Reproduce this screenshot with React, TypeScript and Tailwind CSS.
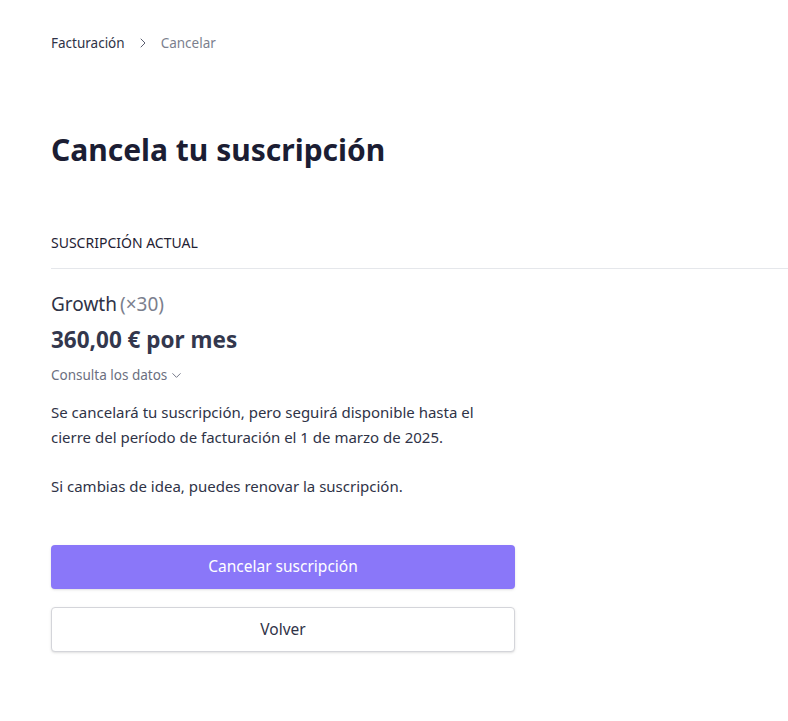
import { ChevronDown, ChevronRight } from 'lucide-react';

export default function App() {
  return (
    <div className="min-h-screen bg-white pl-[51px] pt-[33px] font-['Noto_Sans',sans-serif] text-[#2f3347]">
      <nav className="flex items-center gap-[10px] text-[13.5px] leading-5">
        <span className="text-[#2f3347]">Facturación</span>
        <ChevronRight size={16} strokeWidth={1.5} className="text-[#5b5f70]" />
        <span className="text-[#7b7f8e]">Cancelar</span>
      </nav>

      <h1 className="mt-[77px] text-[30px] font-bold leading-[40px] text-[#1b1d33]">
        Cancela tu suscripción
      </h1>

      <section className="mt-[63px]">
        <h2 className="pb-[15px] text-[14px] uppercase leading-5 text-[#1f2233]">Suscripción actual</h2>
        <div className="border-t border-[#e5e7eb]" />

        <div className="w-[464px]">
          <p className="mt-[21px] text-[19px] leading-7 text-[#2f3347]">
            Growth<span className="ml-[3px] text-[#7b7f8e]">(×30)</span>
          </p>
          <p className="mt-[6px] text-[22.5px] font-bold leading-8 text-[#33374d]">360,00 € por mes</p>
          <button className="mt-[9px] flex items-center gap-[2px] text-[13.5px] leading-5 text-[#6b6f80]">
            Consulta los datos
            <ChevronDown size={15} strokeWidth={1.5} />
          </button>

          <p className="mt-[15px] text-[15px] leading-[25px] text-[#2f3347]">
            Se cancelará tu suscripción, pero seguirá disponible hasta el cierre del período de facturación el 1 de
            marzo de 2025.
          </p>
          <p className="mt-[24px] text-[15px] leading-[25px] text-[#2f3347]">
            Si cambias de idea, puedes renovar la suscripción.
          </p>

          <div className="mt-[46px] flex flex-col gap-[18px]">
            <button className="h-[44px] w-full rounded-[4px] bg-[#8a77f9] text-[15.5px] text-white shadow-sm">
              Cancelar suscripción
            </button>
            <button className="h-[45px] w-full rounded-[4px] border border-[#d4d5da] bg-white text-[15.5px] text-[#2f3347] shadow-sm">
              Volver
            </button>
          </div>
        </div>
      </section>
    </div>
  );
}
